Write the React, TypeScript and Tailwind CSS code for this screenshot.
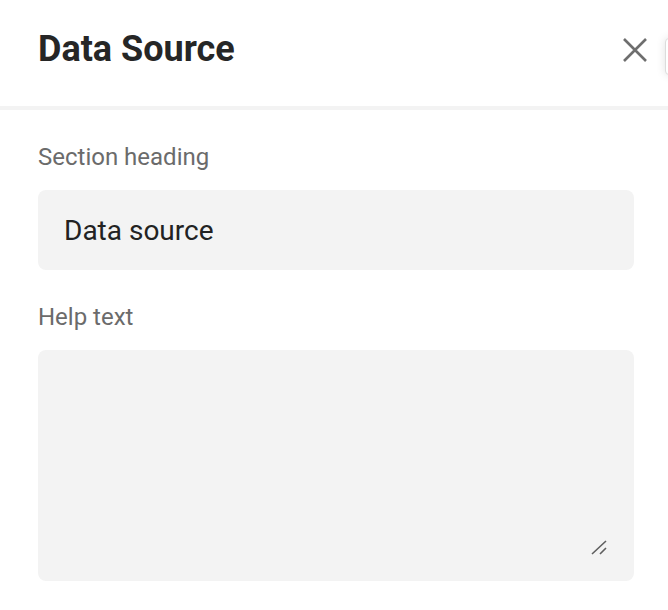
import { useState } from "react";

export default function App() {
  const [heading, setHeading] = useState("Data source");
  const [help, setHelp] = useState("");

  return (
    <div className="relative w-[668px] h-[610px] overflow-hidden bg-white font-['Roboto',sans-serif]">
      {/* HEADER */}
      <div className="flex h-[106px] items-start justify-between pl-[38px] pr-[21px] pt-[27px]">
        <h1 className="text-[36px] leading-[44px] font-bold text-[#262626]">Data Source</h1>
        <button className="mt-[11px] flex h-[24px] w-[24px] items-center justify-center text-[#6e6e6e]">
          <svg width="24" height="24" viewBox="0 0 24 24" fill="none" stroke="currentColor" strokeWidth="2.6">
            <path d="M1 1L23 23M23 1L1 23" />
          </svg>
        </button>
      </div>

      {/* edge of a panel behind */}
      <div className="absolute left-[665px] top-[38px] h-[37px] w-[20px] rounded-[4px] border border-[#dcdcdc] bg-white shadow-[0_0_10px_rgba(0,0,0,0.12)]" />

      <div className="h-[4px] bg-[#f3f3f3]" />

      {/* BODY */}
      <div className="flex flex-col pl-[38px] pr-[34px] pt-[32px]">
        <label className="text-[24px] leading-[30px] text-[#6b6b6b]">Section heading</label>
        <input
          value={heading}
          onChange={(e) => setHeading(e.target.value)}
          className="mt-[18px] h-[80px] w-full rounded-[8px] bg-[#f3f3f3] px-[26px] text-[28px] text-[#222222] outline-none"
        />

        <label className="mt-[32px] text-[24px] leading-[30px] text-[#6b6b6b]">Help text</label>
        <div className="relative mt-[18px]">
          <textarea
            value={help}
            onChange={(e) => setHelp(e.target.value)}
            className="block h-[231px] w-full resize-none rounded-[8px] bg-[#f3f3f3] px-[26px] py-[20px] text-[28px] text-[#222222] outline-none"
          />
          <svg
            className="pointer-events-none absolute right-[27px] bottom-[26px]"
            width="16"
            height="16"
            viewBox="0 0 16 16"
            fill="none"
            stroke="#5f5f5f"
            strokeWidth="1.6"
          >
            <path d="M1 15L15 2M9 15L15 9" />
          </svg>
        </div>
      </div>
    </div>
  );
}
